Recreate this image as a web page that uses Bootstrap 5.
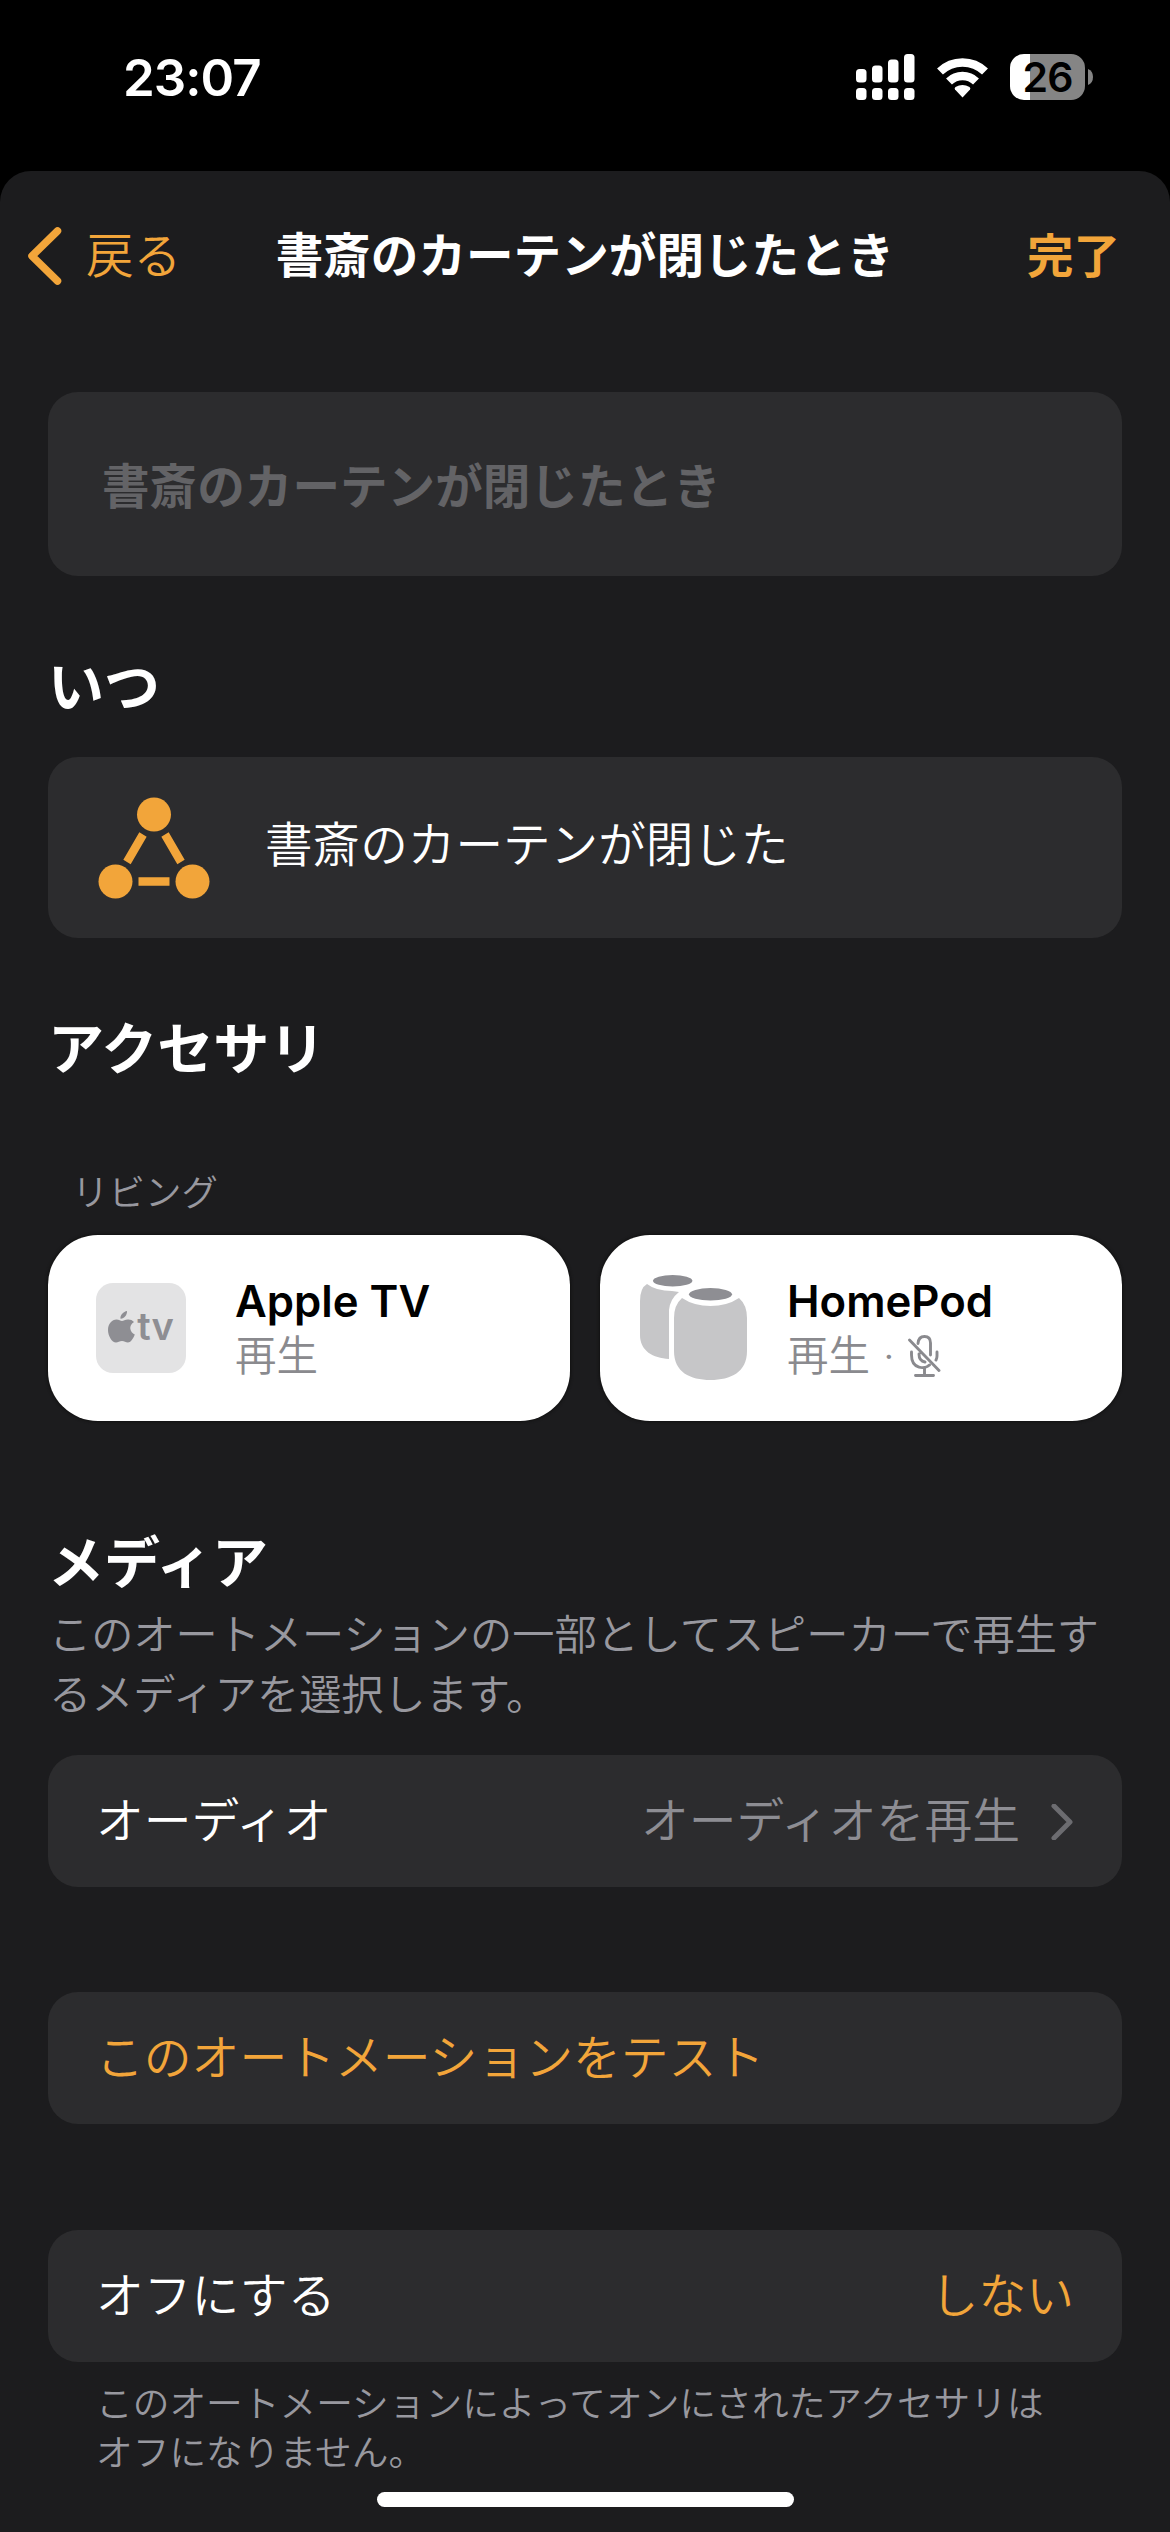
<!DOCTYPE html>
<html lang="ja">
<head>
<meta charset="utf-8">
<meta name="viewport" content="width=device-width, initial-scale=1">
<title>オートメーション</title>
<link href="https://cdn.jsdelivr.net/npm/bootstrap@5.3.0/dist/css/bootstrap.min.css" rel="stylesheet">
<style>
:root{--accent:#f2a53a;--sheet:#1c1c1e;--cell:#2c2c2e;--muted:#98989f}
body{background:#000;color:#fff;font-family:Inter,"Noto Sans CJK JP",sans-serif;font-size:47.6px;font-weight:350;line-height:1;width:1170px;height:2532px;overflow:hidden}
svg{display:block;flex:none}
.statusbar{height:171px;padding:48px 77px 0 123px}
.status-icons{height:58px}
.clock{font-size:51px;line-height:60px;font-weight:600;letter-spacing:-1px}
.wifi{margin:0 22px 0 21px}
.battery{width:75px;height:46px;border-radius:14px;background:linear-gradient(90deg,#fff 20px,#858585 20px);color:#000;font-size:41px;font-weight:600;letter-spacing:-1px}
.battery-tip{margin-left:3px}
.sheet{background:var(--sheet);border-radius:31px 31px 0 0;height:2361px}
.titlebar{height:168px;padding:2px 50px 0 26px}
.titlebar h1{font-size:47.6px;font-weight:700;line-height:70px}
.side{width:240px;line-height:70px}
.side.done{width:216px;font-size:46.5px}
.side span{margin-left:24px}
.accent{color:var(--accent)}
.content{padding:0 48px}
.cell{background:var(--cell);border-radius:30px;padding:0 48px}
.namefield{height:184px;margin-top:53px;padding:4px 54px 0}
.namefield input{font-size:47.6px;font-weight:700;height:80px;padding:0}
.namefield input::placeholder{color:#636366;opacity:1}
.section{font-size:56px;font-weight:700;line-height:70px;margin-bottom:0}
.s-next{margin-top:76px}
.s-media{margin-top:107px}
.when{height:181px;margin-top:35px}
.when span{margin-left:53px;padding-bottom:5px}
.room{font-size:36.5px;line-height:50px;color:var(--muted);padding-left:24px;margin-top:84px}
.tiles{gap:30px;margin-top:17px}
.tile{height:186px;border-radius:50px;background:#fff;color:#000;box-shadow:0 0 3px 1px #111}
.tile .art{width:187px}
.tile .name{font-size:43.7px;font-weight:600;line-height:54px;padding-top:1px}
.tile .state{font-size:41.5px;line-height:54px;color:#8a8a8e}
.tile .dot{padding:0 13px}
.tvbox{width:90px;height:90px;border-radius:17px;background:#e3e3e4;color:#8e8e93;font-size:38px;font-weight:600;margin-left:48px}
.tvbox span{margin-left:2px;padding-bottom:4px}
.pods{margin-left:40px}
.about{font-size:42.2px;line-height:60px;color:var(--muted);margin:7px -10px 0 1px}
.line{height:132px;font-size:47.8px;padding-top:2px}
.value{color:#8d8d93}
.more{margin:0 1px 0 31px}
.foot{font-size:36.7px;line-height:49px;color:var(--muted);padding-left:48px;margin:17px 0 0}
.homebar{width:417px;height:15px;border-radius:8px;background:#fff;margin-top:15px}
</style>
</head>
<body>
<header class="statusbar d-flex justify-content-between align-items-start">
  <div class="clock">23:07</div>
  <div class="status-icons d-flex align-items-center">
    <svg width="60" height="46" viewBox="0 0 60 46" fill="#fff"><rect y="15" width="10.500" height="13.500" rx="3.500"/><rect x="16" y="11.500" width="10.500" height="17" rx="3.500"/><rect x="32" y="5.500" width="10.500" height="23" rx="3.500"/><rect x="48" width="10.500" height="28.500" rx="3.500"/><rect y="34" width="10.500" height="12" rx="3.500"/><rect x="16" y="34" width="10.500" height="12" rx="3.500"/><rect x="32" y="34" width="10.500" height="12" rx="3.500"/><rect x="48" y="34" width="10.500" height="12" rx="3.500"/></svg>
    <svg class="wifi" width="51" height="42" viewBox="0 0 51 42"><g fill="none" stroke="#fff" stroke-width="8.500"><path d="M3 15.500a32.500 32.500 0 0 1 45 0"/><path d="M12 25.500a19.500 19.500 0 0 1 27 0"/></g><path d="M25.500 41.500 18 33.500q-1-1.500.5-2.500 7-4 14 0 1.500 1 .5 2.500z" fill="#fff"/></svg>
    <div class="battery d-flex align-items-center justify-content-center">26</div>
    <svg class="battery-tip" width="5" height="16" viewBox="0 0 5 16"><path d="M0 0q5 2 5 8t-5 8z" fill="#858585"/></svg>
  </div>
</header>
<main class="sheet">
  <nav class="titlebar d-flex justify-content-between align-items-center accent">
    <div class="side d-flex align-items-center">
      <svg width="36" height="58" viewBox="0 0 36 58"><path d="M31.500 4 6 29l25.500 25" fill="none" stroke="#f2a53a" stroke-width="7.500" stroke-linecap="round" stroke-linejoin="round"/></svg>
      <span>戻る</span>
    </div>
    <h1 class="m-0 text-white text-nowrap">書斎のカーテンが閉じたとき</h1>
    <div class="side done text-end fw-bold">完了</div>
  </nav>
  <div class="content">
    <div class="cell namefield d-flex align-items-center">
      <input class="form-control bg-transparent border-0 shadow-none" placeholder="書斎のカーテンが閉じたとき">
    </div>
    <h2 class="section s-next">いつ</h2>
    <div class="cell when d-flex align-items-center">
      <svg width="116" height="102" viewBox="0 -1 116 102" fill="#f2a53a"><circle cx="58" cy="16.500" r="17"/><circle cx="19.500" cy="83.500" r="17"/><circle cx="96.500" cy="83.500" r="17"/><path d="M47 36.500 31 64M69 36.500 85 64M42.500 83.500h31" stroke="#f2a53a" stroke-width="8.500"/></svg>
      <span>書斎のカーテンが閉じた</span>
    </div>
    <h2 class="section s-next">アクセサリ</h2>
    <div class="room">リビング</div>
    <div class="tiles d-flex">
      <div class="tile d-flex align-items-center flex-fill w-50">
        <div class="art"><div class="tvbox d-flex align-items-center justify-content-center">
          <svg width="27" height="34" viewBox="0 0 27 34" fill="#8e8e93"><path d="M19 0c.3 4-3 8-6.500 7.700C12 4 15.500.5 19 0M26 11c-6 3.500-4 10.500.8 12.500C25 28 22.500 31.500 20 31.500s-3.500-1.500-6-1.500-4 1.500-6 1.500C4 31.500 0 25 0 19S4 8.500 8.500 8.500c2.500 0 4 1.500 5.500 1.500s3.500-1.800 6.500-1.500c2 0 4 .8 5.500 2.500"/></svg>
          <span>tv</span></div></div>
        <div><div class="name">Apple TV</div><div class="state">再生</div></div>
      </div>
      <div class="tile d-flex align-items-center flex-fill w-50">
        <div class="art"><svg class="pods" width="107" height="106" viewBox="0 0 107 106"><path d="M7 9q9 7 25 7l7 1q-9 7-10 18v49C13 83 0 76 0 60V26Q0 13 7 9" fill="#c6c6c8"/><ellipse cx="32.700" cy="5.800" rx="19.700" ry="5.700" fill="#8e8e93"/><path d="M42 23q12 8 28.500 8T99 23q8 7 8 20v33c0 21-16 29-36.500 29S34 97 34 76V43q0-13 8-20" fill="#c6c6c8"/><ellipse cx="70.500" cy="19.300" rx="21.500" ry="6.200" fill="#8e8e93"/></svg></div>
        <div><div class="name">HomePod</div><div class="state d-flex align-items-center"><span>再生</span><span class="dot">·</span>
          <svg width="33" height="42" viewBox="0 0 33 42" fill="none" stroke="#8a8a8e" stroke-width="2.900" stroke-linecap="round"><path d="M1.500 5 31 35.500M10 8.500q.5-7 6.500-7T22.500 8v12M11 19q0 7 6 8M3.500 17v3c0 15 14 14 18 10M29 17v4q0 2-1 4M16.500 33v7M7.500 40.500h18"/></svg></div></div>
      </div>
    </div>
    <h2 class="section s-media">メディア</h2>
    <p class="about text-nowrap">このオートメーションの一部としてスピーカーで再生す<br>るメディアを選択します。</p>
    <div class="cell line d-flex align-items-center" style="margin-top:30px">
      <span>オーディオ</span><span class="value ms-auto">オーディオを再生</span>
      <svg class="more" width="22" height="36" viewBox="0 0 22 36"><path d="m3 2 16 16L3 34" fill="none" stroke="#6c6c70" stroke-width="5" stroke-linecap="round" stroke-linejoin="round"/></svg>
    </div>
    <div class="cell line d-flex align-items-center accent" style="margin-top:105px">このオートメーションをテスト</div>
    <div class="cell line d-flex align-items-center justify-content-between" style="margin-top:106px"><span>オフにする</span><span class="accent">しない</span></div>
    <p class="foot">このオートメーションによってオンにされたアクセサリは<br>オフになりません。</p>
    <div class="homebar mx-auto"></div>
  </div>
</main>
<script src="https://cdn.jsdelivr.net/npm/bootstrap@5.3.0/dist/js/bootstrap.bundle.min.js"></script>
</body>
</html>
